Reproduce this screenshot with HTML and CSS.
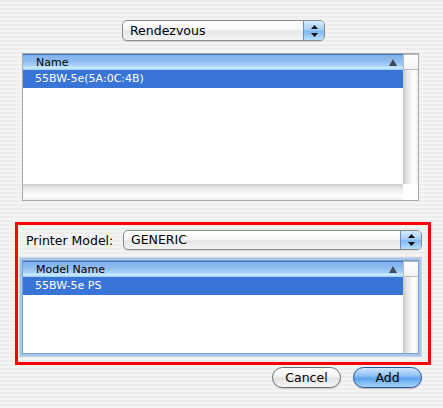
FILE: index.html
```html
<!DOCTYPE html>
<html>
<head>
<meta charset="utf-8">
<link rel="stylesheet" href="styles.css">
</head>
<body>
<div class="page">
  <div class="top-row">
    <div class="popup popup-top">
      <span class="popup-label">Rendezvous</span>
      <span class="popup-arrows">
        <svg width="7" height="14" viewBox="0 0 7 14"><path d="M3.5 1 L7 5 L0 5 Z" fill="#111"/><path d="M0 9 L7 9 L3.5 13 Z" fill="#111"/></svg>
      </span>
    </div>
  </div>

  <div class="list list-one">
    <div class="list-main">
      <div class="list-header">
        <span class="header-title">Name</span>
        <span class="sort-tri"></span>
      </div>
      <div class="list-body">
        <div class="row selected">55BW-5e(5A:0C:4B)</div>
      </div>
      <div class="hscroll"></div>
    </div>
    <div class="vcol">
      <div class="corner-top"></div>
      <div class="vscroll"></div>
      <div class="corner-bottom"></div>
    </div>
  </div>

  <div class="red-box">
    <div class="model-row">
      <span class="model-label">Printer Model:</span>
      <div class="popup popup-model">
        <span class="popup-label">GENERIC</span>
        <span class="popup-arrows">
          <svg width="7" height="14" viewBox="0 0 7 14"><path d="M3.5 1 L7 5 L0 5 Z" fill="#111"/><path d="M0 9 L7 9 L3.5 13 Z" fill="#111"/></svg>
        </span>
      </div>
    </div>
    <div class="list list-two">
      <div class="list-main">
        <div class="list-header">
          <span class="header-title">Model Name</span>
          <span class="sort-tri"></span>
        </div>
        <div class="list-body">
          <div class="row selected">55BW-5e PS</div>
        </div>
      </div>
      <div class="vcol">
        <div class="corner-top"></div>
        <div class="vscroll"></div>
      </div>
    </div>
  </div>

  <div class="buttons">
    <div class="btn btn-cancel">Cancel</div>
    <div class="btn btn-add">Add</div>
  </div>
</div>
</body>
</html>
```

FILE: styles.css
```css
html, body {
  margin: 0;
  padding: 0;
}
body {
  width: 443px;
  height: 408px;
  overflow: hidden;
  font-family: "DejaVu Sans", "Liberation Sans", sans-serif;
  color: #000;
  background: repeating-linear-gradient(to bottom, #ededed 0px, #ededed 2px, #f4f4f4 2px, #f4f4f4 4px);
}
.page {
  display: flex;
  flex-direction: column;
  padding-top: 20px;
}
.top-row {
  display: flex;
  padding-left: 122px;
}
.popup {
  display: flex;
  align-items: stretch;
  box-sizing: border-box;
  border: 1px solid #8a8a8a;
  border-radius: 5px;
  background: linear-gradient(to bottom, #ffffff 0%, #f6f6f6 45%, #e6e6e6 55%, #f4f4f4 100%);
  box-shadow: 0 1px 1px rgba(0,0,0,0.12);
  overflow: hidden;
}
.popup-top {
  width: 203px;
  height: 21px;
}
.popup-label {
  flex: 1;
  font-size: 12.5px;
  line-height: 19px;
  padding-left: 7px;
}
.popup-arrows {
  width: 20px;
  display: flex;
  align-items: center;
  justify-content: center;
  border-left: 1px solid #6f8fb8;
  background: linear-gradient(to bottom, #d6ebff 0%, #a7cff7 45%, #7db7f0 55%, #b9e0ff 100%);
}
.list {
  display: flex;
  box-sizing: border-box;
  width: 397px;
  background: #fff;
}
.list-one {
  margin-left: 22px;
  margin-top: 12px;
  height: 148px;
  border: 1px solid #a9a9a9;
}
.list-main {
  flex: 1;
  display: flex;
  flex-direction: column;
  min-width: 0;
}
.list-header {
  height: 16px;
  display: flex;
  align-items: center;
  justify-content: space-between;
  box-sizing: border-box;
  border-top: 1px solid #3d70c0;
  background: linear-gradient(to bottom, #7fb1ea 0%, #8fbdf0 40%, #a8d0f8 70%, #c8f0ff 85%, #a0c8ee 100%);
  font-size: 11px;
  padding: 0 6px 0 13px;
}
.header-title {
  line-height: 14px;
}
.sort-tri {
  width: 0;
  height: 0;
  border-left: 4px solid transparent;
  border-right: 4px solid transparent;
  border-bottom: 7px solid #3d4a5c;
}
.list-body {
  flex: 1;
}
.row {
  height: 18px;
  line-height: 18px;
  font-size: 11px;
  padding-left: 12px;
}
.row.selected {
  background: #3875d7;
  color: #fff;
}
.hscroll {
  height: 16px;
  background: linear-gradient(to bottom, #cfcfcf 0%, #e6e6e6 25%, #f8f8f8 55%, #ffffff 75%, #f0f0f0 100%);
}
.vcol {
  width: 15px;
  display: flex;
  flex-direction: column;
}
.corner-top {
  height: 16px;
  box-sizing: border-box;
  border: 1px solid #b9b9b9;
  border-right: none;
  background: linear-gradient(to bottom, #ffffff, #f2f2f2);
}
.vscroll {
  flex: 1;
  background: linear-gradient(to right, #c9c9c9 0%, #e4e4e4 25%, #f6f6f6 55%, #ffffff 75%, #eeeeee 100%);
}
.corner-bottom {
  height: 16px;
  background: #fff;
}
.red-box {
  margin-left: 15px;
  margin-top: 21px;
  width: 416px;
  height: 143px;
  box-sizing: border-box;
  border: 3px solid #ff0000;
  display: flex;
  flex-direction: column;
  padding-top: 5px;
}
.model-row {
  display: flex;
  align-items: center;
  height: 20px;
  padding-left: 8px;
}
.model-label {
  width: 97px;
  font-size: 12.5px;
}
.popup-model {
  width: 299px;
  height: 20px;
}
.popup-model .popup-label {
  line-height: 18px;
}
.list-two {
  margin-left: 4px;
  margin-top: 10px;
  height: 94px;
  border: 1px solid #7c9fd0;
  box-shadow: 0 0 0 2px #a9c6ea, 0 0 0 3px rgba(150,185,230,0.45);
}
.buttons {
  display: flex;
  gap: 12px;
  padding-left: 272px;
  margin-top: 2px;
}
.btn {
  width: 69px;
  height: 21px;
  box-sizing: border-box;
  border-radius: 11px;
  font-size: 12.5px;
  line-height: 19px;
  text-align: center;
}
.btn-cancel {
  border: 1px solid #6c6c6c;
  background: linear-gradient(to bottom, #ffffff 0%, #f3f3f3 45%, #e2e2e2 55%, #f8f8f8 100%);
  box-shadow: 0 1px 1px rgba(0,0,0,0.15);
}
.btn-add {
  border: 1px solid #2a4f9c;
  background: linear-gradient(to bottom, #cfe6ff 0%, #8fc2f5 40%, #5ea3ec 55%, #a6d6ff 100%);
  box-shadow: 0 1px 1px rgba(0,0,0,0.2);
}
```
